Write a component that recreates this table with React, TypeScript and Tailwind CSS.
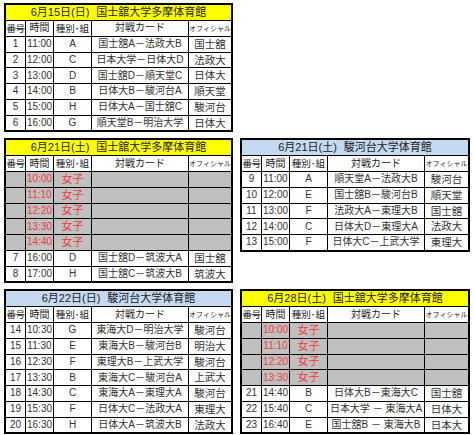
import React from "react";

type Row = {
  no?: string;
  time: string;
  cls: string;
  card?: string;
  off?: string;
  women?: boolean;
};

const FONT = { fontFamily: '"Liberation Sans", "Noto Sans CJK JP", sans-serif' };

function Table({
  title,
  blue,
  rows,
}: {
  title: [string, string];
  blue?: boolean;
  rows: Row[];
}) {
  return (
    <div className="border-2 border-black bg-white">
      <div
        className={
          "flex h-[15px] items-center justify-center whitespace-nowrap text-[11px] leading-none text-[#222] " +
          (blue ? "bg-[#c5d9f1]" : "bg-[#ffff00]")
        }
      >
        <span>{title[0]}</span>
        <span className="ml-[7px]">{title[1]}</span>
      </div>
      <div className="grid h-[15.75px] grid-cols-[20px_28px_38px_97px_1fr] border-t border-black whitespace-nowrap text-[10px] leading-none text-[#222]">
        <div className="flex items-center justify-center overflow-visible border-r border-black text-[9.5px] tracking-[-0.5px]">
          番号
        </div>
        <div className="flex items-center justify-center border-r border-black">時間</div>
        <div className="flex items-center justify-center border-r border-black text-[9.5px]">種別･組</div>
        <div className="flex items-center justify-center border-r border-black">対戦カード</div>
        <div className="flex items-center justify-center text-[7px]">オフィシャル</div>
      </div>
      {rows.map((r, i) => (
        <div
          key={i}
          className={
            "grid h-[15.75px] grid-cols-[20px_28px_38px_97px_1fr] border-t border-black leading-none whitespace-nowrap " +
            (r.women ? "bg-[#c0c0c0]" : "bg-white")
          }
        >
          <div className="flex items-center justify-center border-r border-black text-[10px] text-[#333]">
            {r.no}
          </div>
          <div
            className={
              "flex items-center justify-center border-r border-black text-[10px] " +
              (r.women ? "text-[#f03a3a]" : "text-[#333]")
            }
          >
            {r.time}
          </div>
          <div
            className={
              "flex items-center justify-center border-r border-black " +
              (r.women ? "text-[11px] text-[#f03a3a]" : "text-[10px] text-[#333]")
            }
          >
            {r.cls}
          </div>
          <div className="flex items-center justify-center overflow-hidden border-r border-black text-[10px] text-[#333]">
            {r.card}
          </div>
          <div className="flex items-center justify-center text-[10.5px] text-[#333]">{r.off}</div>
        </div>
      ))}
    </div>
  );
}

const W = (time: string): Row => ({ time, cls: "女子", women: true });

const t1: Row[] = [
  { no: "1", time: "11:00", cls: "A", card: "国士舘A－法政大B", off: "国士舘" },
  { no: "2", time: "12:00", cls: "C", card: "日本大学－日体大D", off: "法政大" },
  { no: "3", time: "13:00", cls: "D", card: "国士舘D－順天堂C", off: "日体大" },
  { no: "4", time: "14:00", cls: "B", card: "日体大B－駿河台A", off: "順天堂" },
  { no: "5", time: "15:00", cls: "H", card: "日体大A－国士舘C", off: "駿河台" },
  { no: "6", time: "16:00", cls: "G", card: "順天堂B－明治大学", off: "日体大" },
];

const t2: Row[] = [
  W("10:00"),
  W("11:10"),
  W("12:20"),
  W("13:30"),
  W("14:40"),
  { no: "7", time: "16:00", cls: "D", card: "国士舘D－筑波大A", off: "国士舘" },
  { no: "8", time: "17:00", cls: "H", card: "国士舘C－筑波大B", off: "筑波大" },
];

const t3: Row[] = [
  { no: "9", time: "11:00", cls: "A", card: "順天堂A－法政大B", off: "駿河台" },
  { no: "10", time: "12:00", cls: "E", card: "国士舘B－駿河台B", off: "順天堂" },
  { no: "11", time: "13:00", cls: "F", card: "法政大A－東理大B", off: "国士舘" },
  { no: "12", time: "14:00", cls: "C", card: "日体大D－東理大A", off: "法政大" },
  { no: "13", time: "15:00", cls: "F", card: "日体大C－上武大学", off: "東理大" },
];

const t4: Row[] = [
  { no: "14", time: "10:30", cls: "G", card: "東海大D－明治大学", off: "駿河台" },
  { no: "15", time: "11:30", cls: "E", card: "東海大B－駿河台B", off: "明治大" },
  { no: "16", time: "12:30", cls: "F", card: "東理大B－上武大学", off: "駿河台" },
  { no: "17", time: "13:30", cls: "B", card: "東海大C－駿河台A", off: "上武大" },
  { no: "18", time: "14:30", cls: "C", card: "東海大A－東理大A", off: "駿河台" },
  { no: "19", time: "15:30", cls: "F", card: "日体大C－法政大A", off: "東理大" },
  { no: "20", time: "16:30", cls: "H", card: "日体大A－筑波大B", off: "法政大" },
];

const t5: Row[] = [
  W("10:00"),
  W("11:10"),
  W("12:20"),
  W("13:30"),
  { no: "21", time: "14:40", cls: "B", card: "日体大B－東海大C", off: "国士舘" },
  { no: "22", time: "15:40", cls: "C", card: "日本大学 － 東海大A", off: "日体大" },
  { no: "23", time: "16:40", cls: "E", card: "国士舘B － 東海大B", off: "日本大" },
];

export default function App() {
  return (
    <div className="h-[435px] w-[474px] overflow-hidden bg-white pl-[4px] pt-[3px]" style={FONT}>
      <div className="grid grid-cols-[229px_230px] items-start gap-x-[7px] gap-y-[6px]">
        <Table title={["6月15日(日)", "国士舘大学多摩体育館"]} rows={t1} />
        <div />
        <Table title={["6月21日(土)", "国士舘大学多摩体育館"]} rows={t2} />
        <Table title={["6月21日(土)", "駿河台大学体育館"]} blue rows={t3} />
        <Table title={["6月22日(日)", "駿河台大学体育館"]} blue rows={t4} />
        <Table title={["6月28日(土)", "国士舘大学多摩体育館"]} rows={t5} />
      </div>
    </div>
  );
}
